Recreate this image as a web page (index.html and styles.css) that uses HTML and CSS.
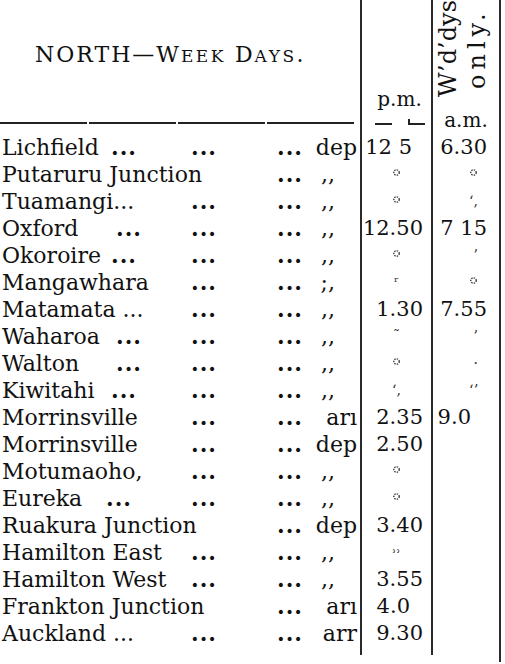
FILE: index.html
```html
<!DOCTYPE html>
<html lang="en">
<head>
<meta charset="utf-8">
<title>North — Week Days timetable</title>
<link rel="stylesheet" href="styles.css">
</head>
<body>
<div class="tt">
  <div class="hd-left">
    <div class="title">NORTH—W<span class="sc">EEK</span> D<span class="sc">AYS</span>.</div>
    <div class="rule"><i></i><i></i><i></i><i></i></div>
  </div>
  <div class="hd-pm">
    <span class="pmlabel">p.m.</span>
    <div class="dash"><i></i><i class="tick"></i></div>
  </div>
  <div class="hd-am">
    <div class="rot"><span class="l1">W’d’dys</span><br><span class="l2">only.</span></div>
    <span class="amlabel">a.m.</span>
  </div>

  <div class="st"><span class="n n1">Lichfield</span><span class="a">...</span><span class="b">...</span><span class="c">...</span><span class="s">dep</span></div>
  <div class="pm r2">12 5</div><div class="am">6.30</div>

  <div class="st"><span class="n n3">Putaruru Junction</span><span class="c">...</span><span class="s d">,,</span></div>
  <div class="pm ctr"><svg class="mk" viewBox="0 0 10 10"><circle cx="5" cy="5" r="3"/></svg></div><div class="am ma"><svg class="mk" viewBox="0 0 10 10"><circle cx="5" cy="5" r="3"/></svg></div>

  <div class="st"><span class="n n2">Tuamangi...</span><span class="b">...</span><span class="c">...</span><span class="s d">,,</span></div>
  <div class="pm ctr"><svg class="mk" viewBox="0 0 10 10"><circle cx="5" cy="5" r="3"/></svg></div><div class="am ma"><span class="tk">ʻ,</span></div>

  <div class="st"><span class="n n1">Oxford</span><span class="a a2">...</span><span class="b">...</span><span class="c">...</span><span class="s d">,,</span></div>
  <div class="pm">12.50</div><div class="am">7 15</div>

  <div class="st"><span class="n n1">Okoroire</span><span class="a">...</span><span class="b">...</span><span class="c">...</span><span class="s d">,,</span></div>
  <div class="pm ctr"><svg class="mk" viewBox="0 0 10 10"><circle cx="5" cy="5" r="3"/></svg></div><div class="am ma"><span class="tk">’</span></div>

  <div class="st"><span class="n n2">Mangawhara</span><span class="b">...</span><span class="c">...</span><span class="s d">;,</span></div>
  <div class="pm ctr"><span class="tk">ʳ</span></div><div class="am ma"><svg class="mk" viewBox="0 0 10 10"><circle cx="5" cy="5" r="3"/></svg></div>

  <div class="st"><span class="n n2">Matamata ...</span><span class="b">...</span><span class="c">...</span><span class="s d">,,</span></div>
  <div class="pm">1.30</div><div class="am">7.55</div>

  <div class="st"><span class="n n1">Waharoa</span><span class="a a2">...</span><span class="b">...</span><span class="c">...</span><span class="s d">,,</span></div>
  <div class="pm ctr"><span class="tk">˜</span></div><div class="am ma"><span class="tk">’</span></div>

  <div class="st"><span class="n n1">Walton</span><span class="a a2">...</span><span class="b">...</span><span class="c">...</span><span class="s d">,,</span></div>
  <div class="pm ctr"><svg class="mk" viewBox="0 0 10 10"><circle cx="5" cy="5" r="3"/></svg></div><div class="am ma"><span class="tk">·</span></div>

  <div class="st"><span class="n n1">Kiwitahi</span><span class="a">...</span><span class="b">...</span><span class="c">...</span><span class="s d">,,</span></div>
  <div class="pm ctr"><span class="tk">ʻ,</span></div><div class="am ma"><span class="tk">ʻʼ</span></div>

  <div class="st"><span class="n n2">Morrinsville</span><span class="b">...</span><span class="c">...</span><span class="s">arı</span></div>
  <div class="pm">2.35</div><div class="am r3">9.0</div>

  <div class="st"><span class="n n2">Morrinsville</span><span class="b">...</span><span class="c">...</span><span class="s">dep</span></div>
  <div class="pm">2.50</div><div class="am"></div>

  <div class="st"><span class="n n2">Motumaoho,</span><span class="b">...</span><span class="c">...</span><span class="s d">,,</span></div>
  <div class="pm ctr"><svg class="mk" viewBox="0 0 10 10"><circle cx="5" cy="5" r="3"/></svg></div><div class="am"></div>

  <div class="st"><span class="n n1">Eureka</span><span class="a a0">...</span><span class="b">...</span><span class="c">...</span><span class="s d">,,</span></div>
  <div class="pm ctr"><svg class="mk" viewBox="0 0 10 10"><circle cx="5" cy="5" r="3"/></svg></div><div class="am"></div>

  <div class="st"><span class="n n3">Ruakura Junction</span><span class="c">...</span><span class="s">dep</span></div>
  <div class="pm">3.40</div><div class="am"></div>

  <div class="st"><span class="n n2">Hamilton East</span><span class="b">...</span><span class="c">...</span><span class="s d">,,</span></div>
  <div class="pm ctr"><span class="tk">˒˒</span></div><div class="am"></div>

  <div class="st"><span class="n n2">Hamilton West</span><span class="b">...</span><span class="c">...</span><span class="s d">,,</span></div>
  <div class="pm">3.55</div><div class="am"></div>

  <div class="st"><span class="n n3">Frankton Junction</span><span class="c">...</span><span class="s">arı</span></div>
  <div class="pm r4">4.0</div><div class="am"></div>

  <div class="st"><span class="n n2">Auckland ...</span><span class="b">...</span><span class="c">...</span><span class="s">arr</span></div>
  <div class="pm">9.30</div><div class="am"></div>

  <div class="st foot"></div><div class="pm foot"></div><div class="am foot"></div>
  <div class="st tail"></div><div class="tail"></div><div class="am tail last"></div>
</div>
</body>
</html>
```

FILE: styles.css
```css
html, body {
  margin: 0;
  padding: 0;
  background: #ffffff;
}

body {
  color: #111111;
  font-family: "DejaVu Serif", "Liberation Serif", serif;
}

.tt {
  display: grid;
  grid-template-columns: 360px 71px 70px;
  width: 501px;
}

/* ---------- header ---------- */
.hd-left {
  height: 134px;
  display: flex;
  flex-direction: column;
}

.title {
  font-size: 22px;
  line-height: 26px;
  letter-spacing: 2px;
  white-space: nowrap;
  padding-top: 42px;
  padding-left: 35px;
}

.title .sc {
  font-size: 17px;
  letter-spacing: 2.5px;
}

.rule {
  margin-top: auto;
  margin-bottom: 10px;
  margin-right: 6px;
  display: flex;
  gap: 2px;
  height: 2px;
}

.rule i {
  display: block;
  flex: 1;
  background: #222;
}

.hd-pm {
  border-left: 2px solid #2a2a2a;
  height: 134px;
  display: flex;
  flex-direction: column;
  align-items: center;
  justify-content: flex-end;
}

.pmlabel {
  font-size: 20px;
  line-height: 24px;
  margin-bottom: 12px;
  margin-left: 6px;
}

.dash {
  display: flex;
  gap: 16px;
  margin-bottom: 9px;
  margin-left: 6px;
}

.dash i {
  display: block;
  width: 17px;
  height: 2px;
  background: #222;
}

.dash .tick {
  position: relative;
}

.dash .tick::before {
  content: "";
  position: absolute;
  left: 0;
  top: -4px;
  width: 2px;
  height: 5px;
  background: #222;
}

.hd-am {
  border-left: 2px solid #2a2a2a;
  border-right: 2px solid #2a2a2a;
  height: 134px;
  display: flex;
  flex-direction: column;
  align-items: center;
}

.rot {
  writing-mode: vertical-rl;
  transform: rotate(180deg);
  font-size: 24px;
  line-height: 29px;
  height: 106px;
  text-align: center;
  margin-top: -4px;
  align-self: flex-start;
  margin-left: 1px;
  white-space: nowrap;
}

.rot .l2 {
  letter-spacing: 5px;
}

.amlabel {
  font-size: 20px;
  line-height: 24px;
  margin-top: 6px;
}

/* ---------- rows ---------- */
.st {
  display: grid;
  grid-template-columns: 104px 82px 88px 30px 1fr;
  height: 27px;
  line-height: 27px;
  font-size: 22px;
  padding-left: 2px;
  padding-right: 3px;
  white-space: nowrap;
}

.n { grid-column: 1; }
.n2 { grid-column: 1 / 3; }
.n3 { grid-column: 1 / 4; }

.a { grid-column: 2; padding-left: 5px; font-weight: bold; letter-spacing: 1px; }
.a2 { padding-left: 10px; }
.a0 { padding-left: 0; }
.b { grid-column: 3; padding-left: 3px; font-weight: bold; letter-spacing: 1px; }
.c { grid-column: 4; padding-left: 1px; font-weight: bold; letter-spacing: 1px; }
.s { grid-column: 5; text-align: right; }
.s.d { padding-right: 22px; }

.pm,
.am {
  height: 27px;
  line-height: 27px;
  font-size: 21px;
  text-align: right;
  border-left: 2px solid #2a2a2a;
  white-space: nowrap;
}

.pm { padding-right: 8px; }

.am {
  border-right: 2px solid #2a2a2a;
  padding-right: 12px;
}

.pm.ctr {
  text-align: center;
  padding-right: 0;
}

.am.ma { padding-right: 21px; }

.r2 { padding-right: 19px; }
.r4 { padding-right: 21px; }
.r3 { padding-right: 28px; }

.mk {
  width: 9px;
  height: 9px;
  vertical-align: 4px;
  fill: none;
  stroke: #333;
  stroke-width: 1.5;
  stroke-dasharray: 1.6 1.2;
}

.tk {
  font-size: 14px;
  color: #333;
  vertical-align: 4px;
}

.foot { height: 8px; line-height: 8px; }

.tail { height: 7px; }
.st.tail, .tail { border: none; }
.am.tail.last {
  border-left: none;
  border-right: 2px solid #2a2a2a;
}
```
